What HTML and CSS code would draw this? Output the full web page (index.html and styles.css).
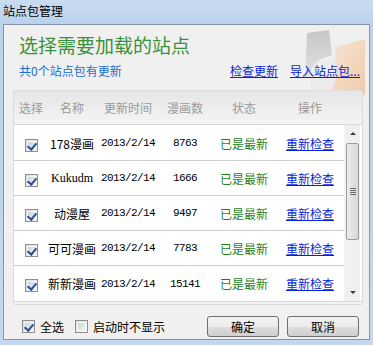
FILE: index.html
```html
<!DOCTYPE html>
<html>
<head>
<meta charset="utf-8">
<link rel="stylesheet" href="styles.css">
</head>
<body>
<div class="window">
  <div class="titlebar">站点包管理</div>
  <div class="client">
    <svg class="deco" width="70" height="72" viewBox="0 0 70 72">
      <defs>
        <linearGradient id="og" x1="0" y1="0" x2="1" y2="1">
          <stop offset="0" stop-color="#f7e2c8"/>
          <stop offset="1" stop-color="#f3b582"/>
        </linearGradient>
        <linearGradient id="gg" x1="0" y1="0" x2="0" y2="1">
          <stop offset="0" stop-color="#b4b4b4"/>
          <stop offset="1" stop-color="#dcdcdc"/>
        </linearGradient>
      </defs>
      <path d="M8 8 L30 5 L33 30 L22 34 Q12 40 10 52 L6 52 Z" fill="url(#gg)" opacity="0.7"/>
      <path d="M36 22 L66 14 L66 70 L30 70 Q40 52 36 40 Z" fill="url(#og)" opacity="0.65"/>
      <path d="M10 52 Q14 40 24 36 L36 34 Q42 50 30 70 L14 70 Z" fill="#ebebeb" opacity="0.9"/>
    </svg>
    <h1 class="heading">选择需要加载的站点</h1>
    <div class="subrow">
      <span class="count">共0个站点包有更新</span>
      <span class="links"><a class="link">检查更新</a><a class="link">导入站点包...</a></span>
    </div>
    <div class="panel">
      <div class="thead cols">
        <span>选择</span><span>名称</span><span>更新时间</span><span>漫画数</span><span>状态</span><span>操作</span>
      </div>
      <div class="listbox">
        <div class="rows">
          <div class="row cols"><span><i class="cb on"></i></span><span>178漫画</span><span class="mono">2013/2/14</span><span class="mono">8763</span><span class="ok">已是最新</span><span><a class="link">重新检查</a></span></div>
          <div class="row cols"><span><i class="cb on"></i></span><span class="serif">Kukudm</span><span class="mono">2013/2/14</span><span class="mono">1666</span><span class="ok">已是最新</span><span><a class="link">重新检查</a></span></div>
          <div class="row cols"><span><i class="cb on"></i></span><span>动漫屋</span><span class="mono">2013/2/14</span><span class="mono">9497</span><span class="ok">已是最新</span><span><a class="link">重新检查</a></span></div>
          <div class="row cols"><span><i class="cb on"></i></span><span>可可漫画</span><span class="mono">2013/2/14</span><span class="mono">7783</span><span class="ok">已是最新</span><span><a class="link">重新检查</a></span></div>
          <div class="row cols"><span><i class="cb on"></i></span><span>新新漫画</span><span class="mono">2013/2/14</span><span class="mono">15141</span><span class="ok">已是最新</span><span><a class="link">重新检查</a></span></div>
        </div>
        <div class="scrollbar">
          <div class="arrow up"></div>
          <div class="track"><div class="thumb"><i></i><i></i><i></i><i></i></div></div>
          <div class="arrow down"></div>
        </div>
      </div>
    </div>
    <div class="footer">
      <label class="opt"><i class="cb on"></i>全选</label>
      <label class="opt"><i class="cb"></i>启动时不显示</label>
      <span class="spacer"></span>
      <button class="btn">确定</button>
      <button class="btn">取消</button>
    </div>
  </div>
</div>
</body>
</html>
```
FILE: styles.css
```css
* { box-sizing: border-box; }
html, body { margin: 0; padding: 0; }
body {
  width: 373px;
  height: 345px;
  overflow: hidden;
  font-family: "Noto Sans CJK SC", "Liberation Sans", sans-serif;
  font-size: 12px;
  color: #000;
}
.window {
  width: 373px;
  height: 345px;
  background: linear-gradient(180deg, #c9dcf1 0px, #bcd2ec 22px, #c3d7ee 100%);
  display: flex;
  flex-direction: column;
  padding: 0 3px 5px 3px;
}
.titlebar {
  height: 24px;
  line-height: 22px;
  font-size: 12px;
  color: #000;
}
.client {
  position: relative;
  flex: 1;
  background: #f0f0f0;
  border: 1px solid #8595aa;
  display: flex;
  flex-direction: column;
  padding: 0 7px 0 8px;
  overflow: hidden;
}
.deco {
  position: absolute;
  right: 0;
  top: 0;
}
.heading {
  position: relative;
  margin: 7px 0 0 7px;
  font-size: 19px;
  font-weight: normal;
  line-height: 26px;
  color: #3a923a;
}
.subrow {
  position: relative;
  display: flex;
  align-items: center;
  height: 16px;
  margin-top: 4px;
  padding-left: 7px;
}
.count { color: #1b6fd0; }
.links {
  margin-left: auto;
  display: flex;
  gap: 12px;
  margin-right: 2px;
}
.link {
  color: #0a1fd8;
  text-decoration: underline;
}
.panel {
  position: relative;
  margin-top: 12px;
  margin-left: 1px;
  width: 350px;
  border: 1px solid #dcdcdc;
  border-radius: 2px;
  background: #f3f3f3;
}
.cols {
  display: grid;
  grid-template-columns: 34px 48px 64px 50px 68px 64px;
  align-items: center;
  justify-items: center;
}
.thead {
  height: 33px;
  color: #9a9a9a;
  font-size: 12px;
  background: linear-gradient(180deg, #e6e6e6, #f4f4f4);
}
.listbox {
  display: flex;
  background: #fff;
  border-top: 1px solid #d6d6d6;
  border-bottom: 1px solid #d6d6d6;
  height: 178px;
  margin-bottom: 2px;
}
.rows {
  flex: 1;
  padding-top: 1px;
}
.row {
  height: 35px;
  border-bottom: 1px solid #cfcfcf;
  white-space: nowrap;
}
.row:last-child { border-bottom: none; }
.mono {
  font-family: "Liberation Mono", monospace;
  font-size: 11px;
  letter-spacing: -0.6px;
}
.serif {
  font-family: "Liberation Serif", serif;
  font-size: 12px;
}
.ok { color: #1f7f1f; }
.cb {
  display: inline-block;
  width: 13px;
  height: 13px;
  border: 1px solid #8e8f8f;
  background: linear-gradient(135deg, #dcdcdc, #f8f8f8);
  position: relative;
  vertical-align: middle;
}
.cb::before {
  content: "";
  position: absolute;
  inset: 1px;
  border: 1px solid #f4f4f4;
  background: linear-gradient(135deg, #cbd2dc, #f2f4f7);
}
.cb.on::after {
  content: "";
  position: absolute;
  left: 3px;
  top: 1px;
  width: 4px;
  height: 7px;
  border-right: 2px solid #2d4f97;
  border-bottom: 2px solid #2d4f97;
  transform: rotate(40deg);
}
.scrollbar {
  width: 16px;
  margin-right: 2px;
  background: #f0f0f0;
  display: flex;
  flex-direction: column;
  border-left: 1px solid #f4f4f4;
}
.arrow {
  height: 17px;
  position: relative;
}
.arrow::after {
  content: "";
  position: absolute;
  left: 5px;
  width: 0;
  height: 0;
  border-left: 3px solid transparent;
  border-right: 3px solid transparent;
}
.arrow.up::after { top: 7px; border-bottom: 3px solid #3c3c3c; }
.arrow.down::after { top: 7px; border-top: 3px solid #3c3c3c; }
.track {
  flex: 1;
  padding: 1px;
}
.thumb {
  height: 97px;
  border: 1px solid #9c9c9c;
  border-radius: 2px;
  background: linear-gradient(90deg, #ececec, #d8d8d8);
  display: flex;
  flex-direction: column;
  align-items: center;
  justify-content: center;
  gap: 1px;
}
.thumb i {
  display: block;
  width: 6px;
  height: 1px;
  background: #6b6b6b;
}
.footer {
  display: flex;
  align-items: center;
  height: 46px;
  padding-left: 10px;
  padding-top: 8px;
}
.opt {
  display: flex;
  align-items: center;
  gap: 5px;
  margin-right: 11px;
}
.spacer { flex: 1; }
.btn {
  width: 72px;
  height: 21px;
  margin-left: 8px;
  border: 1px solid #707070;
  border-radius: 3px;
  background: linear-gradient(180deg, #f3f3f3 0%, #ebebeb 50%, #dddddd 51%, #cfcfcf 100%);
  font-family: "Noto Sans CJK SC", sans-serif;
  font-size: 12px;
  padding: 0;
  color: #000;
}
.btn:last-child { margin-right: 3px; }
```
